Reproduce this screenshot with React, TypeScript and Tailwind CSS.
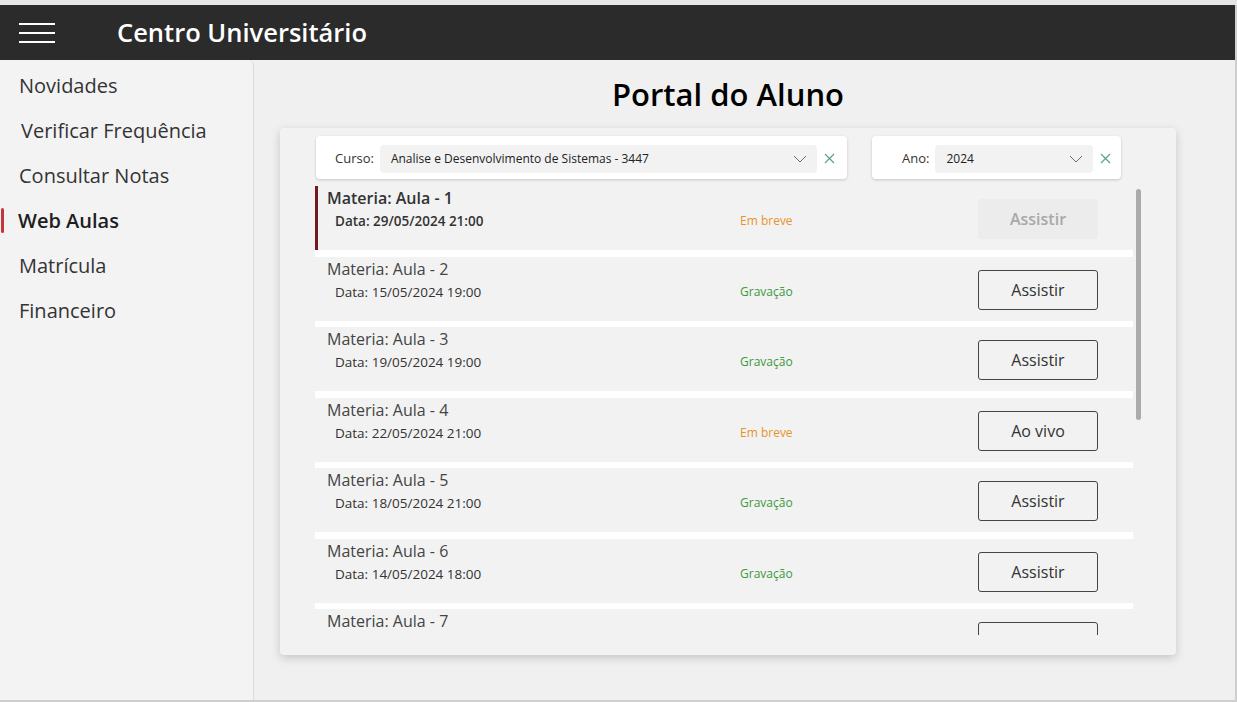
import React from "react";

interface Aula {
  n: number;
  data: string;
  status: "Em breve" | "Gravação";
  acao: string;
}

const aulas: Aula[] = [
  { n: 1, data: "29/05/2024 21:00", status: "Em breve", acao: "Assistir" },
  { n: 2, data: "15/05/2024 19:00", status: "Gravação", acao: "Assistir" },
  { n: 3, data: "19/05/2024 19:00", status: "Gravação", acao: "Assistir" },
  { n: 4, data: "22/05/2024 21:00", status: "Em breve", acao: "Ao vivo" },
  { n: 5, data: "18/05/2024 21:00", status: "Gravação", acao: "Assistir" },
  { n: 6, data: "14/05/2024 18:00", status: "Gravação", acao: "Assistir" },
  { n: 7, data: "", status: "Gravação", acao: "Assistir" },
];

const menu = ["Novidades", "Verificar Frequência", "Consultar Notas", "Web Aulas", "Matrícula", "Financeiro"];

const Chevron = () => (
  <svg width="14" height="8" viewBox="0 0 14 8" fill="none" stroke="#6b6b6b" strokeWidth="1">
    <path d="M1 1l6 6 6-6" />
  </svg>
);

const Close = () => (
  <svg width="11" height="11" viewBox="0 0 11 11" fill="none" stroke="#5f9f94" strokeWidth="1.2">
    <path d="M1 1l9 9M10 1l-9 9" />
  </svg>
);

const Filtro: React.FC<{ label: string; value: string; className: string; selW: string }> = ({ label, value, className, selW }) => (
  <div className={`h-[43px] bg-white rounded shadow-[0_1px_3px_rgba(0,0,0,0.18)] flex items-center pt-[2px] ${className}`}>
    <span className="text-[13px] text-[#333] mr-[6px]">{label}</span>
    <div className={`h-[28px] ${selW} bg-[#f2f2f2] rounded flex items-center justify-between pl-[11px] pr-[10px]`}>
      <span className="text-[12px] text-[#222]">{value}</span>
      <Chevron />
    </div>
    <span className="ml-[7px] flex items-center">
      <Close />
    </span>
  </div>
);

const AulaRow: React.FC<{ aula: Aula }> = ({ aula }) => {
  const ativa = aula.n === 1;
  return (
    <div className={`h-[64px] shrink-0 bg-[#f2f2f2] flex border-l-[3px] ${ativa ? "border-[#6e1c20]" : "border-transparent"}`}>
      <div className="flex-1 pl-[9px]">
        <div className={`text-[16px] leading-[22px] mt-[1px] ${ativa ? "font-semibold text-[#333]" : "text-[#444]"}`}>
          Materia: Aula - {aula.n}
        </div>
        {aula.data && (
          <div className={`text-[13.5px] leading-[20px] mt-[2px] pl-[8px] text-[#333] ${ativa ? "font-semibold" : ""}`}>
            Data: {aula.data}
          </div>
        )}
      </div>
      <div className="w-[238px] pt-[25px]">
        {aula.data && (
          <div className={`text-[12px] leading-[20px] ${aula.status === "Em breve" ? "text-[#e8922c]" : "text-[#3c9a3c]"}`}>
            {aula.status}
          </div>
        )}
      </div>
      <div className="w-[155px] pt-[13px]">
        {ativa ? (
          <button className="w-[120px] h-[40px] bg-[#ececec] rounded text-[16px] font-semibold text-[#a8a8a8]">
            {aula.acao}
          </button>
        ) : (
          <button className="w-[120px] h-[40px] border-[1.5px] border-[#444] rounded-[3px] text-[16px] text-[#333]">
            {aula.acao}
          </button>
        )}
      </div>
    </div>
  );
};

export default function App() {
  return (
    <div
      className="w-[1237px] h-[702px] bg-[#e6e6e6] pt-[5px] overflow-hidden"
      style={{ fontFamily: '"Open Sans", "Noto Sans", sans-serif' }}
    >
      <div className="h-[697px] flex flex-col border-r-2 border-b-2 border-[#cfcfcf]">
        <header className="h-[55px] bg-[#2b2b2b] flex items-center shrink-0">
          <div className="w-[36px] ml-[19px] flex flex-col gap-[7px]">
            <span className="h-[2px] bg-white block" />
            <span className="h-[2px] bg-white block" />
            <span className="h-[2px] bg-white block" />
          </div>
          <h1 className="ml-[62px] text-[25.5px] font-semibold text-white">Centro Universitário</h1>
        </header>
        <div className="flex flex-1 min-h-0 bg-[#f0f0f0]">
          <nav className="w-[254px] bg-[#f3f3f3] border-r border-[#dcdcdc] rounded-tr-md pt-[3px]">
            {menu.map((item) => {
              const ativo = item === "Web Aulas";
              return (
                <div key={item} className="h-[45px] flex items-center relative">
                  {ativo && <span className="absolute left-[1px] top-[10px] w-[3px] h-[25px] bg-[#c1373a] rounded-full" />}
                  <span
                    className={`text-[20px] ${ativo ? "font-semibold text-[#1e1e1e] ml-[18px]" : "text-[#333] ml-[19px]"} ${item === "Verificar Frequência" ? "ml-[21px]" : ""}`}
                  >
                    {item}
                  </span>
                </div>
              );
            })}
          </nav>
          <main className="flex-1 pl-[26px]">
            <div className="w-[896px]">
              <h2 className="text-center text-[31px] font-semibold text-black mt-[14px] leading-[40px]">
                Portal do Aluno
              </h2>
              <section className="mt-[14px] h-[527px] bg-[#f2f2f2] rounded shadow-[0_3px_10px_rgba(0,0,0,0.18)] pt-[8px] pl-[36px]">
                <div className="flex gap-[25px]">
                  <Filtro label="Curso:" value="Analise e Desenvolvimento de Sistemas - 3447" className="w-[531px] pl-[19px]" selW="w-[437px]" />
                  <Filtro label="Ano:" value="2024" className="w-[249px] pl-[30px]" selW="w-[158px]" />
                </div>
                <div className="flex mt-[7px] -ml-[1px]">
                  <div className="w-[818px] h-[449px] overflow-hidden bg-white flex flex-col gap-[6.5px]">
                    {aulas.map((a) => (
                      <AulaRow key={a.n} aula={a} />
                    ))}
                  </div>
                  <div className="ml-[3px] mt-[3px] w-[5px] h-[231px] bg-[#ababab] rounded-full" />
                </div>
              </section>
            </div>
          </main>
        </div>
      </div>
    </div>
  );
}
